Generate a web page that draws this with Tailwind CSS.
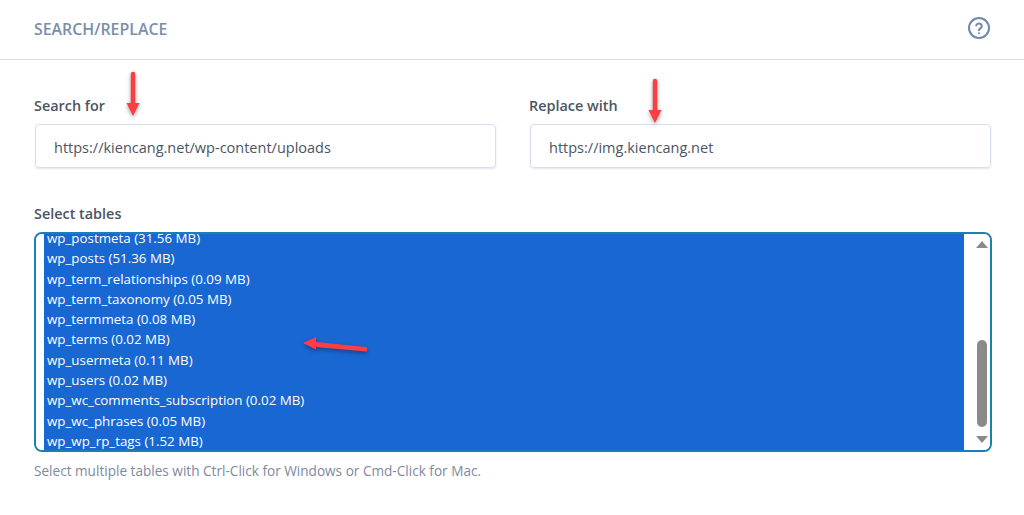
<!doctype html>
<html>
<head>
<meta charset="utf-8">
<title>Search/Replace</title>
<script src="https://cdn.jsdelivr.net/npm/@tailwindcss/browser@4"></script>
</head>
<body class="bg-white">
<div class="relative w-[1024px] h-[515px] overflow-hidden bg-white font-['Open_Sans','Noto_Sans',sans-serif]">
  <!-- header -->
  <div class="h-[60px] pl-[34px] pr-[33px] border-b border-[#d5dce8] flex items-center justify-between">
    <h2 class="text-[15.9px] font-semibold text-[#7a8fab] leading-none">SEARCH/REPLACE</h2>
    <svg class="w-[24px] h-[24px] -mt-[4px] text-[#7089a8]" viewBox="0 0 24 24" fill="none" stroke="currentColor" stroke-width="2" stroke-linecap="round">
      <circle cx="12" cy="12" r="10"/>
      <path d="M9.2 9.4a2.9 2.9 0 0 1 5.6.8c0 1.9-2.800 2.400-2.800 4"/>
      <path d="M12 17.2v.1"/>
    </svg>
  </div>

  <div class="px-[34px] pt-[36px]">
    <div class="grid grid-cols-[462px_462px] gap-x-[33px]">
      <div>
        <label class="block text-[14.4px] font-semibold text-[#4b5563] leading-5 mb-[8px]">Search for</label>
        <div class="h-[44px] ml-px rounded border border-[#d5dff0] shadow-[0_1px_2px_rgba(100,120,160,0.2)] pl-[18px] pt-[3px] flex items-center text-[14.5px] text-[#4b5563]">https://kiencang.net/wp-content/uploads</div>
      </div>
      <div>
        <label class="block text-[14.4px] font-semibold text-[#4b5563] leading-5 mb-[8px]">Replace with</label>
        <div class="h-[44px] ml-px rounded border border-[#d5dff0] shadow-[0_1px_2px_rgba(100,120,160,0.2)] pl-[18px] pt-[3px] flex items-center text-[14.5px] text-[#4b5563]">https://img.kiencang.net</div>
      </div>
    </div>

    <label class="block mt-[36px] text-[14.4px] font-semibold text-[#4b5563] leading-5 mb-[8px]">Select tables</label>
    <div class="w-[958px] h-[220px] rounded-lg border-2 border-[#1a7fb5] overflow-hidden flex">
      <div class="w-[8px] bg-white"></div>
      <div class="w-[920px] bg-[#1967d2] text-white text-[13.35px] pl-[3px] -mt-[6px]">
        <div class="h-[20.3px] leading-[20.3px]">wp_postmeta (31.56 MB)</div>
        <div class="h-[20.3px] leading-[20.3px]">wp_posts (51.36 MB)</div>
        <div class="h-[20.3px] leading-[20.3px]">wp_term_relationships (0.09 MB)</div>
        <div class="h-[20.3px] leading-[20.3px]">wp_term_taxonomy (0.05 MB)</div>
        <div class="h-[20.3px] leading-[20.3px]">wp_termmeta (0.08 MB)</div>
        <div class="h-[20.3px] leading-[20.3px]">wp_terms (0.02 MB)</div>
        <div class="h-[20.3px] leading-[20.3px]">wp_usermeta (0.11 MB)</div>
        <div class="h-[20.3px] leading-[20.3px]">wp_users (0.02 MB)</div>
        <div class="h-[20.3px] leading-[20.3px]">wp_wc_comments_subscription (0.02 MB)</div>
        <div class="h-[20.3px] leading-[20.3px]">wp_wc_phrases (0.05 MB)</div>
        <div class="h-[20.3px] leading-[20.3px]">wp_wp_rp_tags (1.52 MB)</div>
      </div>
      <!-- scrollbar -->
      <div class="flex-1 bg-white flex flex-col items-center justify-between py-[7px] pl-[9px]">
        <svg class="w-[12px] h-[7px]" viewBox="0 0 12 7"><path d="M6 0l6 7H0z" fill="#8a8a8a"/></svg>
        <div class="w-[10px] h-[87px] mt-[82px] rounded-full bg-[#8a8a8a]"></div>
        <svg class="w-[12px] h-[7px]" viewBox="0 0 12 7"><path d="M0 0h12L6 7z" fill="#8a8a8a"/></svg>
      </div>
    </div>
    <p class="mt-[9px] text-[13.6px] leading-5 text-[#7d8aa0]">Select multiple tables with Ctrl-Click for Windows or Cmd-Click for Mac.</p>
  </div>

  <!-- red annotation arrows drawn over the form -->
  <svg class="absolute left-[122px] top-[68px] w-[22px] h-[54px]" viewBox="0 0 22 54" fill="#fb3e44" style="filter:drop-shadow(0 2px 2px rgba(0,0,0,.35))">
    <path d="M8.750 6a2.250 2.250 0 0 1 4.500 0V35h4.250L11 48 4.500 35h4.250z"/>
  </svg>
  <svg class="absolute left-[644px] top-[75px] w-[22px] h-[54px]" viewBox="0 0 22 54" fill="#fb3e44" style="filter:drop-shadow(0 2px 2px rgba(0,0,0,.35))">
    <path d="M8.750 6a2.250 2.250 0 0 1 4.500 0V35h4.250L11 48 4.500 35h4.250z"/>
  </svg>
  <svg class="absolute left-[298px] top-[332px] w-[76px] h-[26px]" viewBox="0 0 76 26" fill="#fb3e44" style="filter:drop-shadow(0 2px 2px rgba(0,0,0,.35))">
    <path d="M5 11l13-6v5l50 5c1.800.2 1.600 4.600-.2 4.500L18 15v2.500z"/>
  </svg>
</div>
</body>
</html>
